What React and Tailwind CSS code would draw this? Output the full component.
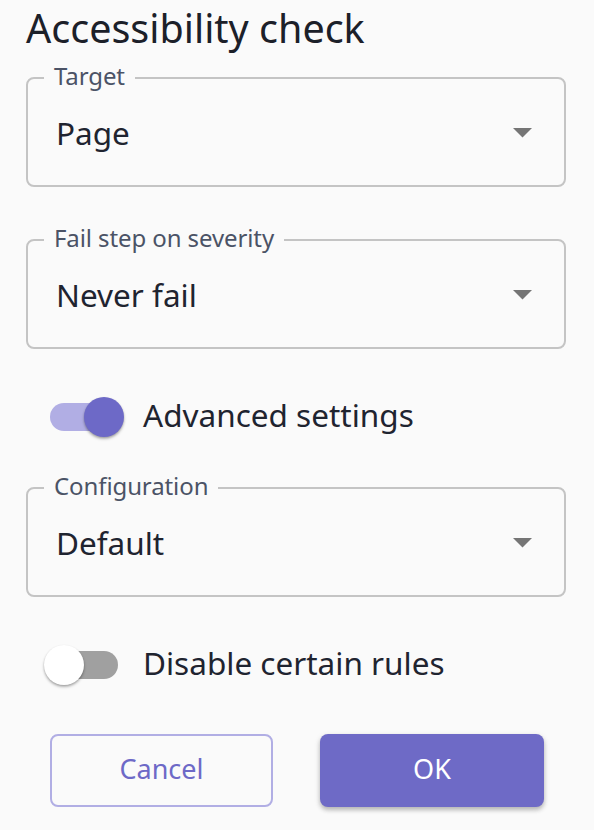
import React from "react";

const font = { fontFamily: '"Noto Sans", "Open Sans", sans-serif' };

function Field({ label, value }) {
  return (
    <div className="relative h-[110px] w-[540px] rounded-[8px] border-2 border-[#c4c4c4] flex items-center justify-between pl-[28px] pr-[32px]">
      <span className="absolute left-[16px] top-[-17px] bg-[#fafafa] px-[10px] text-[24px] leading-[28px] text-[#4b5366] tracking-[-0.1px]">
        {label}
      </span>
      <span className="text-[31.5px] leading-[40px] text-[#1f2430] mt-[1px]">{value}</span>
      <svg width="19" height="10" viewBox="0 0 19 10" className="mt-[1px]">
        <path d="M0 0 L19 0 L9.5 9.5 Z" fill="#757575" />
      </svg>
    </div>
  );
}

function Switch({ on }) {
  return (
    <div className="relative w-[116px] h-[76px] shrink-0">
      <div
        className={
          "absolute left-[24px] top-[24px] w-[68px] h-[28px] rounded-full " +
          (on ? "bg-[#b1aee4]" : "bg-[#a0a0a0]")
        }
      />
      <div
        className={
          "absolute top-[18px] w-[40px] h-[40px] rounded-full shadow-[0_2px_3px_rgba(0,0,0,0.25),0_1px_2px_rgba(0,0,0,0.15)] " +
          (on ? "left-[58px] bg-[#6d69c7]" : "left-[18px] bg-white")
        }
      />
    </div>
  );
}

export default function App() {
  return (
    <div className="w-[594px] h-[830px] bg-[#fafafa] overflow-hidden" style={font}>
      <div className="pl-[26px]">
        <h1 className="pt-[4px] text-[39.5px] leading-[48px] font-normal text-[#1c2029]">
          Accessibility check
        </h1>
        <div className="mt-[25px]">
          <Field label="Target" value="Page" />
        </div>
        <div className="mt-[52px]">
          <Field label="Fail step on severity" value="Never fail" />
        </div>
        <div className="mt-[30px] flex items-center h-[76px]">
          <Switch on />
          <span className="text-[31.5px] leading-[40px] text-[#1f2430] ml-[1px] mt-[-4px]">Advanced settings</span>
        </div>
        <div className="mt-[32px]">
          <Field label="Configuration" value="Default" />
        </div>
        <div className="mt-[30px] flex items-center h-[76px]">
          <Switch on={false} />
          <span className="text-[31.5px] leading-[40px] text-[#1f2430] ml-[1px] mt-[-4px]">Disable certain rules</span>
        </div>
        <div className="mt-[31px] flex pl-[24px] gap-[47px]">
          <button className="w-[223px] h-[73px] rounded-[8px] border-2 border-[#b1aee4] bg-transparent text-[#6d69c7] text-[27px] flex items-center justify-center pb-[2px]">
            Cancel
          </button>
          <button className="w-[224px] h-[73px] rounded-[8px] bg-[#6e6ac6] text-white text-[27px] flex items-center justify-center pb-[2px] shadow-[0_3px_4px_rgba(0,0,0,0.2),0_2px_6px_rgba(0,0,0,0.12)]">
            OK
          </button>
        </div>
      </div>
    </div>
  );
}
